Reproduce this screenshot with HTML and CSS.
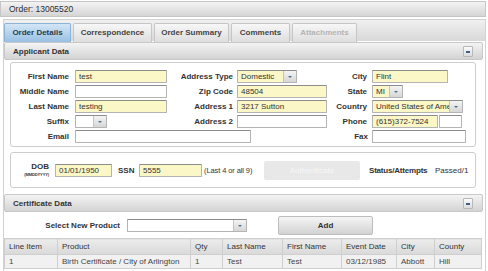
FILE: index.html
```html
<!DOCTYPE html>
<html lang="en">
<head>
  <meta charset="UTF-8">
  <title>Order 13005520</title>
  <link rel="stylesheet" href="styles.css">
</head>
<body>
  <div class="page">
    <div class="order-bar">Order: 13005520</div>

    <div class="wrap">
      <div class="tabs">
        <span class="tab active t67">Order Details</span>
        <span class="tab t79">Correspondence</span>
        <span class="tab t75">Order Summary</span>
        <span class="tab t59">Comments</span>
        <span class="tab disabled t65">Attachments</span>
      </div>

      <div class="panel-head">
        <span>Applicant Data</span>
        <span class="collapse"></span>
      </div>

      <div class="box applicant">
        <label>First Name</label>
        <input class="fill w92" value="test">
        <label>Address Type</label>
        <span class="combo fill w60"><span class="combo-text">Domestic</span><span class="arrow"></span></span>
        <label>City</label>
        <input class="fill w76" value="Flint">

        <label>Middle Name</label>
        <input class="w92" value="">
        <label>Zip Code</label>
        <input class="fill w90" value="48504">
        <label>State</label>
        <span class="combo fill w31"><span class="combo-text">MI</span><span class="arrow"></span></span>

        <label>Last Name</label>
        <input class="fill w92" value="testing">
        <label>Address 1</label>
        <input class="fill w90" value="3217 Sutton">
        <label>Country</label>
        <span class="combo fill w91"><span class="combo-text">United States of America</span><span class="arrow"></span></span>

        <label>Suffix</label>
        <span class="combo w32"><span class="combo-text"></span><span class="arrow"></span></span>
        <label>Address 2</label>
        <input class="w90" value="">
        <label>Phone</label>
        <span class="phone">
          <input class="fill w66" value="(615)372-7524">
          <input class="w23" value="">
        </span>

        <label>Email</label>
        <input class="email" value="">
        <label class="fax-label">Fax</label>
        <input class="w94" value="">
      </div>

      <div class="box auth">
        <div class="dob-label">DOB<small>(MMDDYYYY)</small></div>
        <input class="fill dob" value="01/01/1950">
        <label class="ssn-label">SSN</label>
        <input class="fill ssn" value="5555">
        <span class="note">(Last 4 or all 9)</span>
        <span class="btn-auth">Authenticate</span>
        <label class="status">Status/Attempts</label>
        <span class="passed">Passed/1</span>
      </div>

      <div class="panel-head cert">
        <span>Certificate Data</span>
        <span class="collapse"></span>
      </div>

      <div class="product-row">
        <label>Select New Product</label>
        <span class="combo w120"><span class="combo-text"></span><span class="arrow"></span></span>
        <span class="btn-add">Add</span>
      </div>

      <table class="items">
        <tr>
          <th class="c-line">Line Item</th>
          <th class="c-product">Product</th>
          <th class="c-qty">Qty</th>
          <th class="c-last">Last Name</th>
          <th class="c-first">First Name</th>
          <th class="c-date">Event Date</th>
          <th class="c-city">City</th>
          <th>County</th>
        </tr>
        <tr>
          <td>1</td>
          <td>Birth Certificate / City of Arlington</td>
          <td>1</td>
          <td>Test</td>
          <td>Test</td>
          <td>03/12/1985</td>
          <td>Abbott</td>
          <td>Hill</td>
        </tr>
      </table>
    </div>
  </div>
</body>
</html>
```

FILE: styles.css
```css
* {
  box-sizing: border-box;
}

body {
  margin: 0;
  background-color: #fff;
  font-family: "Liberation Sans", Arial, sans-serif;
  font-size: 8px;
  color: #333;
}

.page {
  width: 488px;
}

.order-bar {
  height: 16px;
  width: 486px;
  margin-top: 1px;
  padding-left: 8px;
  line-height: 14px;
  font-size: 8.5px;
  background: linear-gradient(#f3f3f3, #d5d5d5);
  border: 1px solid #c6c6c6;
  color: #2e2e2e;
}

.wrap {
  width: 483px;
  margin: 2px 0 0 3px;
  border-left: 1px solid #d2d2d2;
  border-right: 1px solid #d2d2d2;
  min-height: 260px;
}

/* tabs */
.tabs {
  display: flex;
  gap: 2px;
  height: 22px;
  padding-top: 3px;
  background: linear-gradient(#f0f0f0, #d8d8d8);
  border-top: 1px solid #d2d2d2;
}

.tab {
  height: 19px;
  line-height: 18px;
  text-align: center;
  white-space: nowrap;
  font-weight: bold;
  color: #444;
  background: linear-gradient(#f7f7f7, #dedede);
  border: 1px solid #c6c6c6;
  border-bottom: none;
  border-radius: 2px 2px 0 0;
}

.t59 { width: 59px; }
.t65 { width: 65px; }
.t67 { width: 67px; }
.t75 { width: 75px; }
.t79 { width: 79px; }

.tab.active {
  background: linear-gradient(#d4e6f5, #98c0e3);
  border-color: #8cb2d4;
  color: #2b3b4b;
}

.tab.disabled {
  color: #b4b4b4;
}

/* panel headers */
.panel-head {
  display: flex;
  align-items: center;
  justify-content: space-between;
  height: 18px;
  margin: 1px 2px 0 0;
  padding: 0 9px 0 8px;
  background: linear-gradient(#f4f4f4, #d3d3d3);
  border: 1px solid #c8c8c8;
  border-radius: 2px;
  font-weight: bold;
  color: #333;
}

.panel-head.cert {
  margin-top: 6px;
}

.collapse {
  position: relative;
  width: 10px;
  height: 11px;
  background: linear-gradient(#fbfbfb, #dcdcdc);
  border: 1px solid #b8b8b8;
  border-radius: 1px;
}

.collapse::after {
  content: "";
  position: absolute;
  left: 2px;
  top: 4px;
  width: 4px;
  height: 2px;
  background-color: #3f5f7f;
}

/* boxes */
.box {
  width: 466px;
  margin: 2px 0 0 6px;
  border: 1px solid #cdcdcd;
  border-radius: 3px;
}

label {
  font-weight: bold;
  color: #333;
  white-space: nowrap;
}

input {
  height: 13px;
  padding: 0 3px;
  font-family: "Liberation Sans", Arial, sans-serif;
  font-size: 8px;
  color: #333;
  background-color: #fff;
  border: 1px solid #b4b4b4;
  border-top-color: #8c8c8c;
  border-radius: 1px;
  outline: none;
}

.fill {
  background-color: #fbf7c6;
}

.combo {
  display: flex;
  height: 13px;
  background-color: #fff;
  border: 1px solid #b4b4b4;
  border-top-color: #8c8c8c;
  border-radius: 1px;
  overflow: hidden;
}

.combo.fill {
  background-color: #fbf7c6;
}

.combo-text {
  flex: 1;
  padding-left: 3px;
  line-height: 11px;
  white-space: nowrap;
  overflow: hidden;
}

.arrow {
  position: relative;
  width: 13px;
  flex: none;
  background: linear-gradient(#f4f4f4, #d6d6d6);
  border-left: 1px solid #c4c4c4;
}

.arrow::after {
  content: "";
  position: absolute;
  left: 4px;
  top: 5px;
  border-left: 2px solid transparent;
  border-right: 2px solid transparent;
  border-top: 2px solid #4f6f8f;
}

.w23 { width: 23px; }
.w31 { width: 31px; }
.w32 { width: 32px; }
.w60 { width: 60px; }
.w66 { width: 66px; }
.w76 { width: 76px; }
.w90 { width: 90px; }
.w91 { width: 91px; }
.w92 { width: 92px; }
.w94 { width: 94px; }
.w120 { width: 120px; }

/* applicant grid */
.applicant {
  display: grid;
  grid-template-columns: 64px 92px 70px 90px 45px 1fr;
  grid-auto-rows: 13px;
  row-gap: 2px;
  align-items: center;
  padding: 7px 0 3px;
}

.applicant label {
  text-align: right;
  padding-right: 6px;
}

.applicant label:nth-of-type(3n+2) {
  padding-right: 4px;
}

.applicant label:nth-of-type(3n) {
  padding-right: 5px;
}

.applicant .fax-label {
  grid-column: 5;
  padding-right: 5px;
}

.applicant .email {
  grid-column: 2 / 5;
  width: 176px;
}

.phone {
  display: flex;
  gap: 1px;
}

/* dob / ssn row */
.auth {
  display: flex;
  align-items: center;
  height: 36px;
  margin-top: 5px;
  white-space: nowrap;
  color: #333;
}

.dob-label {
  display: flex;
  flex-direction: column;
  align-items: flex-end;
  width: 38px;
  flex: none;
  font-weight: bold;
  line-height: 8px;
}

.dob-label small {
  font-size: 4px;
  line-height: 7px;
  letter-spacing: -0.1px;
}

.dob {
  width: 57px;
  flex: none;
  margin-left: 6px;
}

.ssn-label {
  width: 17px;
  flex: none;
  margin-left: 6px;
}

.ssn {
  width: 63px;
  flex: none;
  margin-left: 4px;
}

.note {
  width: 57px;
  flex: none;
  margin-left: 2px;
  font-size: 7.5px;
  letter-spacing: -0.1px;
}

.btn-auth {
  width: 96px;
  height: 19px;
  flex: none;
  margin-left: 3px;
  line-height: 19px;
  text-align: center;
  color: #f7f7f7;
  background-color: #e8e8e8;
  border-radius: 2px;
}

.auth .status {
  width: 60px;
  flex: none;
  margin-left: 9px;
  letter-spacing: -0.2px;
}

.passed {
  margin-left: 6px;
}

/* product row */
.product-row {
  display: flex;
  align-items: center;
  height: 25px;
  margin-top: 1px;
}

.product-row label {
  width: 116px;
  text-align: right;
  margin-right: 7px;
}

.btn-add {
  width: 95px;
  height: 19px;
  margin-left: 31px;
  line-height: 18px;
  text-align: center;
  font-weight: bold;
  color: #333;
  background: linear-gradient(#f5f5f5, #d2d2d2);
  border: 1px solid #bdbdbd;
  border-radius: 2px;
}

/* items table */
.items {
  width: 478px;
  border-collapse: collapse;
  font-size: 8px;
}

.items th,
.items td {
  padding: 0 4px;
  text-align: left;
  border: 1px solid #cfcfcf;
  white-space: nowrap;
}

.items th {
  height: 16px;
  font-weight: normal;
  color: #333;
  background: linear-gradient(#ececec, #d9d9d9);
}

.items td {
  height: 14px;
  background-color: #f1f1f1;
  color: #444;
}

.c-line { width: 53px; }
.c-product { width: 133px; }
.c-qty { width: 32px; }
.c-last { width: 60px; }
.c-first { width: 59px; }
.c-date { width: 55px; }
.c-city { width: 38px; }
```
